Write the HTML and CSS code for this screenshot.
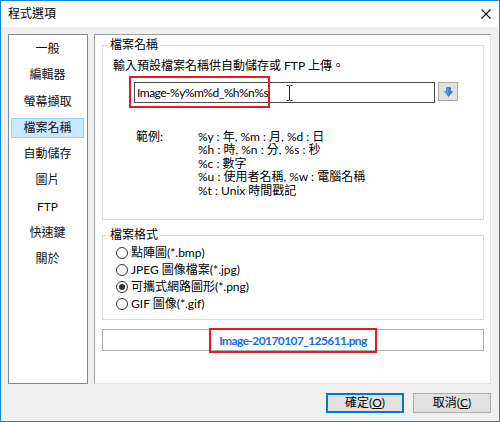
FILE: index.html
```html
<!DOCTYPE html>
<html lang="zh-Hant">
<head>
<meta charset="utf-8">
<title>程式選項</title>
<link rel="stylesheet" href="styles.css">
</head>
<body>
<div class="window">
  <div class="titlebar">
    <span class="title">程式選項</span>
    <svg class="close" width="10" height="10" viewBox="0 0 10 10"><path d="M0.5 0.5L9.5 9.5M9.5 0.5L0.5 9.5" stroke="#111" stroke-width="1.1" fill="none"/></svg>
  </div>
  <div class="client">
    <div class="main">
      <ul class="nav">
        <li><span>一般</span></li>
        <li><span>編輯器</span></li>
        <li><span>螢幕擷取</span></li>
        <li class="selected"><span>檔案名稱</span></li>
        <li><span>自動儲存</span></li>
        <li><span>圖片</span></li>
        <li><span>FTP</span></li>
        <li><span>快速鍵</span></li>
        <li><span>關於</span></li>
      </ul>
      <div class="page">
        <fieldset class="group group-name">
          <legend>檔案名稱</legend>
          <p class="hint">輸入預設檔案名稱供自動儲存或 FTP 上傳。</p>
          <div class="input-row">
            <div class="textbox">Image-%y%m%d_%h%n%s</div>
            <button class="insert-btn" type="button">
              <svg width="9" height="10" viewBox="0 0 9 10"><defs><linearGradient id="ag" x1="0" y1="0" x2="1" y2="0"><stop offset="0" stop-color="#7db4f5"/><stop offset="1" stop-color="#1d5fd6"/></linearGradient></defs><path d="M2.5 0.5H6.5V4.5H8.5L4.5 9.5L0.5 4.5H2.5Z" fill="url(#ag)" stroke="#2a63c9" stroke-width="0.6"/></svg>
            </button>
            <span class="highlight hl-input"></span>
            <svg class="ibeam" width="7" height="16" viewBox="0 0 7 16"><path d="M0.5 0.5H2.5Q3.5 0.5 3.5 1.5V14.5Q3.5 15.5 2.5 15.5H0.5M6.5 0.5H4.5Q3.5 0.5 3.5 1.5M6.5 15.5H4.5Q3.5 15.5 3.5 14.5" stroke="#222" stroke-width="1" fill="none"/></svg>
          </div>
          <div class="examples">
            <span class="ex-label">範例:</span>
            <div class="ex-list">
              <div>%y : 年, %m : 月, %d : 日</div>
              <div>%h : 時, %n : 分, %s : 秒</div>
              <div>%c : 數字</div>
              <div>%u : 使用者名稱, %w : 電腦名稱</div>
              <div>%t : Unix 時間戳記</div>
            </div>
          </div>
        </fieldset>
        <fieldset class="group group-format">
          <legend>檔案格式</legend>
          <label class="radio"><span class="dot"></span>點陣圖(*.bmp)</label>
          <label class="radio"><span class="dot"></span>JPEG 圖像檔案(*.jpg)</label>
          <label class="radio"><span class="dot checked"></span>可攜式網路圖形(*.png)</label>
          <label class="radio"><span class="dot"></span>GIF 圖像(*.gif)</label>
        </fieldset>
        <div class="preview"><span class="preview-text">Image-20170107_125611.png</span></div>
      </div>
    </div>
    <div class="footer">
      <button class="btn btn-default" type="button">確定(<u>O</u>)</button>
      <button class="btn" type="button">取消(<u>C</u>)</button>
    </div>
  </div>
</div>
</body>
</html>
```

FILE: styles.css
```css
* { box-sizing: border-box; }
html, body { margin: 0; padding: 0; }
body {
  font-family: Lato, "Noto Sans CJK TC", sans-serif;
  font-size: 12px;
  color: #000;
  background: #f0f0f0;
}
.window {
  width: 500px;
  height: 422px;
  border: 1px solid #1883d7;
  display: flex;
  flex-direction: column;
  background: #f0f0f0;
}
.titlebar {
  height: 26px;
  background: #fff;
  display: flex;
  align-items: center;
  justify-content: space-between;
  padding: 0 8px 0 7px;
  flex: none;
}
.title { line-height: 16px; }
.close { display: block; }
.client {
  flex: 1;
  display: flex;
  flex-direction: column;
  padding: 7px 8px 8px 7px;
}
.main {
  height: 350px;
  display: flex;
  gap: 6px;
}
.nav {
  width: 80px;
  margin: 0;
  padding: 0;
  list-style: none;
  background: #fff;
  border: 1px solid #828790;
}
.nav li {
  height: 26.25px;
  display: flex;
  align-items: center;
  padding: 0 3px 0 2px;
}
.nav li:first-child { margin-top: 1px; }
.nav li span {
  flex: 1;
  height: 20px;
  line-height: 18px;
  text-align: center;
  border: 1px solid transparent;
  color: #111;
}
.nav li.selected span {
  background: #cce8ff;
  border-color: #99d1ff;
}
.page {
  flex: 1;
  background: #fff;
  border-top: 1px solid #a0a0a0;
  border-left: 1px solid #a0a0a0;
  border-right: 1px solid #e3e3e3;
  border-bottom: 1px solid #e3e3e3;
  padding: 3px 6px 0 7px;
}
.group {
  margin: 0;
  padding: 0;
  min-width: 0;
  border: 1px solid #dcdcdc;
}
.group legend {
  margin-left: 5px;
  padding: 0 2px;
  line-height: 14px;
}
.group-name { padding: 0 0 22px 0; }
.hint {
  margin: 6px 0 0 10px;
  line-height: 16px;
}
.input-row {
  position: relative;
  display: flex;
  align-items: flex-start;
  margin-top: 8px;
  padding-left: 31px;
}
.textbox {
  width: 301px;
  height: 21px;
  border: 1px solid #4a4a4a;
  background: #fff;
  padding-left: 2px;
  line-height: 19px;
  letter-spacing: -0.5px;
  white-space: nowrap;
}
.insert-btn {
  width: 20px;
  height: 19px;
  margin-left: 3px;
  padding: 0;
  border: 1px solid #adadad;
  background: #e1e1e1;
  display: flex;
  align-items: center;
  justify-content: center;
}
.insert-btn svg { display: block; }
.highlight {
  position: absolute;
  border: 2px solid #e31b23;
  pointer-events: none;
}
.hl-input {
  left: 26px;
  top: -6px;
  width: 141px;
  height: 32px;
}
.ibeam {
  position: absolute;
  left: 183px;
  top: 3px;
}
.examples {
  display: flex;
  margin-top: 27px;
  padding-left: 33px;
  line-height: 13.4px;
}
.ex-label { width: 62px; flex: none; }
.group-format {
  margin-top: 8px;
  padding: 2px 0 7px 0;
}
.radio {
  display: flex;
  align-items: center;
  height: 17px;
  padding-left: 13px;
  line-height: 17px;
}
.dot {
  width: 12px;
  height: 12px;
  border: 1px solid #333;
  border-radius: 50%;
  background: #fff;
  margin-right: 3px;
  display: flex;
  align-items: center;
  justify-content: center;
  flex: none;
}
.dot.checked::after {
  content: "";
  width: 6px;
  height: 6px;
  border-radius: 50%;
  background: #333;
}
.preview {
  margin-top: 9px;
  height: 22px;
  border: 1px solid #adadad;
  background: #fff;
  display: flex;
  align-items: center;
  justify-content: center;
}
.preview-text {
  flex: none;
  height: 25px;
  line-height: 21px;
  padding: 0 8px;
  border: 2px solid #e31b23;
  color: #1a6ddb;
  font-weight: bold;
  letter-spacing: -0.6px;
  white-space: nowrap;
}
.footer {
  margin-top: 9px;
  display: flex;
  justify-content: flex-end;
  gap: 9px;
}
.btn {
  width: 78px;
  height: 20px;
  padding: 0;
  font: inherit;
  line-height: 16px;
  border: 1px solid #adadad;
  background: #e1e1e1;
  color: #000;
}
.btn-default {
  border-color: #0078d7;
  box-shadow: inset 0 0 0 1px #0078d7;
}
```
